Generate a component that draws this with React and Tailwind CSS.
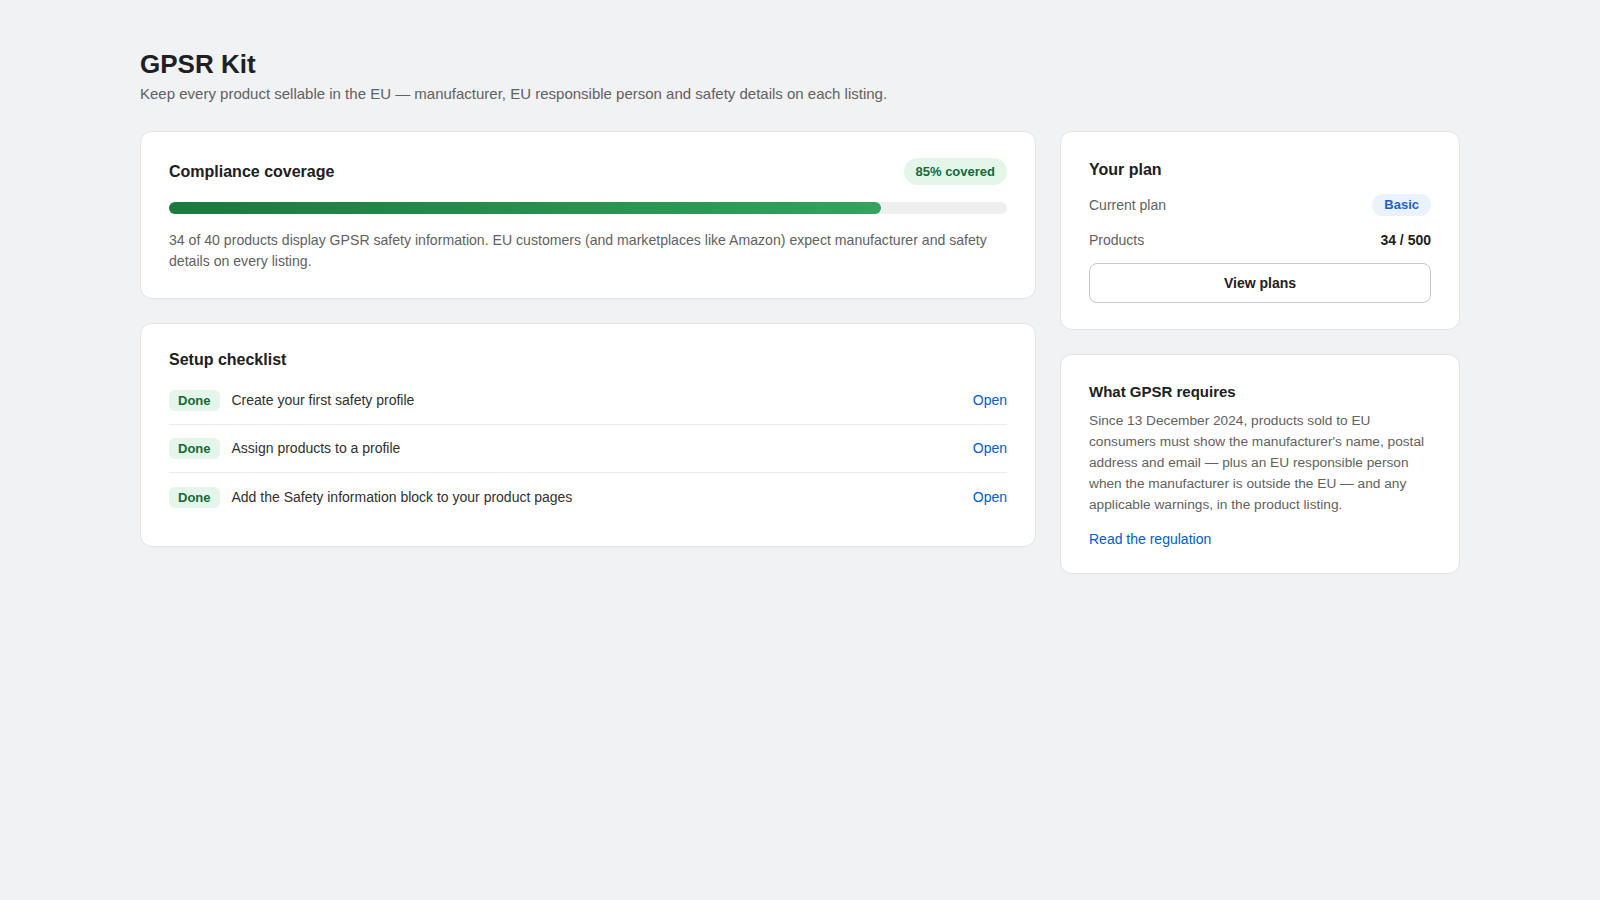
export default function App() {
  const rows = [
    "Create your first safety profile",
    "Assign products to a profile",
    "Add the Safety information block to your product pages",
  ];
  return (
    <div className="min-h-screen bg-[#f1f2f4] text-[#303030]" style={{ fontFamily: '"Liberation Sans", Arial, Helvetica, sans-serif' }}>
      <div className="mx-auto max-w-[1320px] pt-[47px]">
        <h1 className="text-[26px] font-bold leading-[34px] text-[#202020]">GPSR Kit</h1>
        <p className="mt-[3px] text-[15px] leading-[20px] text-[#616161]">
          Keep every product sellable in the EU — manufacturer, EU responsible person and safety details on each listing.
        </p>
        <div className="mt-[27px] grid grid-cols-[1fr_400px] gap-6 items-start">
          <div className="flex flex-col gap-6">
            <section className="rounded-xl border border-[#e3e3e3] bg-white px-7 pt-[26px] pb-[27px]">
              <div className="flex items-center justify-between">
                <h2 className="text-[16px] font-bold text-[#202020]">Compliance coverage</h2>
                <span className="rounded-full bg-[#e3f6e9] px-3 py-[4px] text-[13px] font-bold leading-[19px] text-[#136a3b]">85% covered</span>
              </div>
              <div className="mt-[17px] h-3 w-full rounded-full bg-[#efeff0]">
                <div className="h-3 rounded-full bg-gradient-to-r from-[#1b7a3e] to-[#33a35f]" style={{ width: "85%" }} />
              </div>
              <p className="mt-[16px] text-[14.1px] leading-[20.5px] text-[#616161]">
                34 of 40 products display GPSR safety information. EU customers (and marketplaces like Amazon) expect manufacturer and safety details on every listing.
              </p>
            </section>
            <section className="rounded-xl border border-[#e3e3e3] bg-white px-7 pt-[24px] pb-[25px]">
              <h2 className="text-[16px] font-bold text-[#202020]">Setup checklist</h2>
              <ul className="mt-[5px]">
                {rows.map((r, i) => (
                  <li key={i} className={"flex items-center justify-between h-12 " + (i < rows.length - 1 ? "border-b border-[#ebebeb]" : "")}>
                    <div className="flex items-center gap-3">
                      <span className="rounded-md bg-[#e3f6e9] px-[9px] text-[13px] font-bold leading-[21px] text-[#136a3b]">Done</span>
                      <span className="text-[14px] text-[#303030]">{r}</span>
                    </div>
                    <a className="text-[14px] text-[#005bd3]">Open</a>
                  </li>
                ))}
              </ul>
            </section>
          </div>
          <div className="flex flex-col gap-6">
            <section className="rounded-xl border border-[#e3e3e3] bg-white px-7 pt-[26px] pb-[26px]">
              <h2 className="text-[16px] font-bold text-[#202020]">Your plan</h2>
              <div className="mt-[12px] flex items-center justify-between">
                <span className="text-[14px] text-[#616161]">Current plan</span>
                <span className="rounded-full bg-[#eaf2fe] px-[12px] text-[13px] font-bold leading-[22px] text-[#1f5fce]">Basic</span>
              </div>
              <div className="mt-[14px] flex items-center justify-between">
                <span className="text-[14px] text-[#616161]">Products</span>
                <span className="text-[14px] font-bold text-[#202020]">34 / 500</span>
              </div>
              <button className="mt-[12px] h-10 w-full rounded-lg border border-[#c9c9c9] bg-white text-[14px] font-bold text-[#202020]">View plans</button>
            </section>
            <section className="rounded-xl border border-[#e3e3e3] bg-white px-7 pt-[26px] pb-[23px]">
              <h2 className="text-[15px] font-bold text-[#202020]">What GPSR requires</h2>
              <p className="mt-[6px] text-[13.7px] leading-[21px] text-[#616161]">
                Since 13 December 2024, products sold to EU consumers must show the manufacturer's name, postal address and email — plus an EU responsible person when the manufacturer is outside the EU — and any applicable warnings, in the product listing.
              </p>
              <a className="mt-[14px] block text-[14px] text-[#005bd3]">Read the regulation</a>
            </section>
          </div>
        </div>
      </div>
    </div>
  );
}
